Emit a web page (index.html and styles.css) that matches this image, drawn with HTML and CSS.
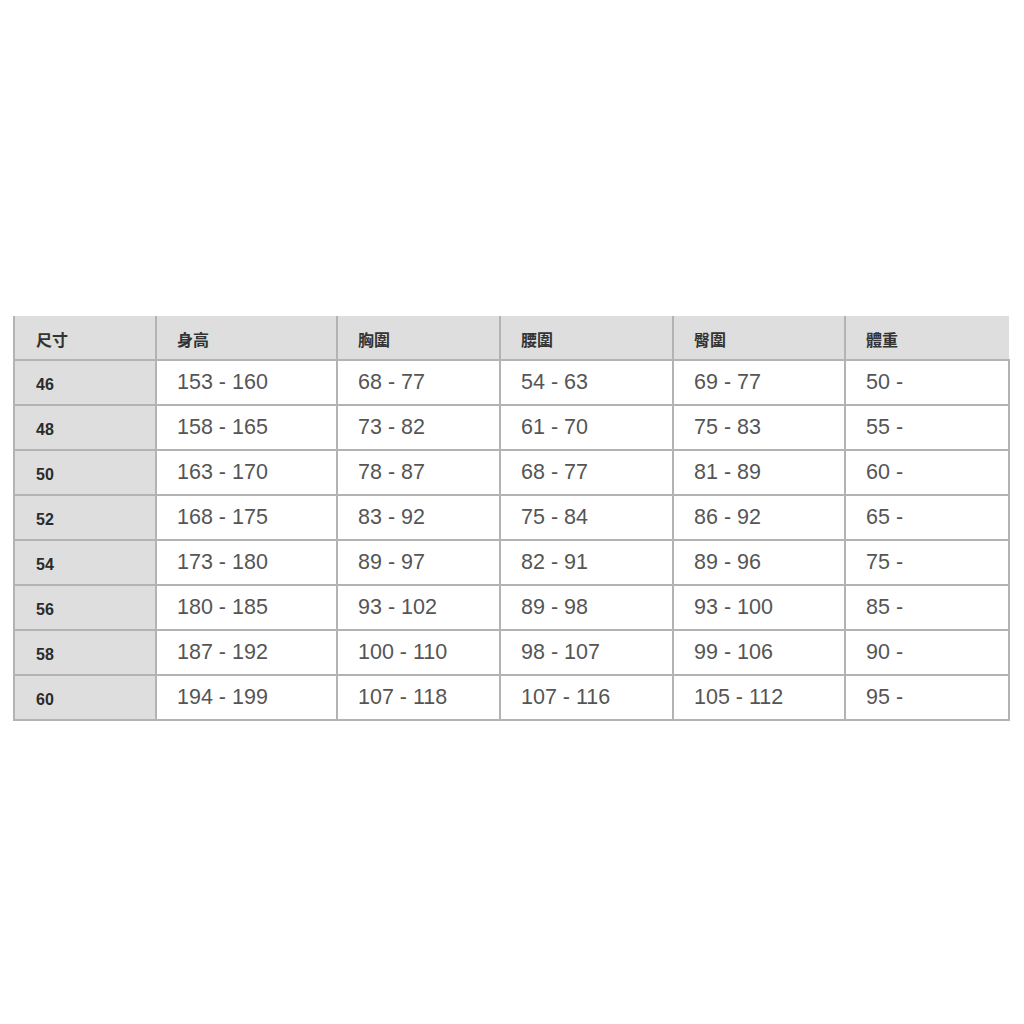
FILE: index.html
```html
<!DOCTYPE html>
<html lang="zh-Hant">
<head>
<meta charset="utf-8">
<title>尺寸表</title>
<link rel="stylesheet" href="styles.css">
</head>
<body>
<div class="page">
<table class="size-table">
<colgroup>
<col class="c1"><col class="c2"><col class="c3"><col class="c4"><col class="c5"><col class="c6">
</colgroup>
<thead>
<tr><th>尺寸</th><th>身高</th><th>胸圍</th><th>腰圍</th><th>臀圍</th><th>體重</th></tr>
</thead>
<tbody>
<tr><th>46</th><td>153 - 160</td><td>68 - 77</td><td>54 - 63</td><td>69 - 77</td><td>50 -</td></tr>
<tr><th>48</th><td>158 - 165</td><td>73 - 82</td><td>61 - 70</td><td>75 - 83</td><td>55 -</td></tr>
<tr><th>50</th><td>163 - 170</td><td>78 - 87</td><td>68 - 77</td><td>81 - 89</td><td>60 -</td></tr>
<tr><th>52</th><td>168 - 175</td><td>83 - 92</td><td>75 - 84</td><td>86 - 92</td><td>65 -</td></tr>
<tr><th>54</th><td>173 - 180</td><td>89 - 97</td><td>82 - 91</td><td>89 - 96</td><td>75 -</td></tr>
<tr><th>56</th><td>180 - 185</td><td>93 - 102</td><td>89 - 98</td><td>93 - 100</td><td>85 -</td></tr>
<tr><th>58</th><td>187 - 192</td><td>100 - 110</td><td>98 - 107</td><td>99 - 106</td><td>90 -</td></tr>
<tr><th>60</th><td>194 - 199</td><td>107 - 118</td><td>107 - 116</td><td>105 - 112</td><td>95 -</td></tr>
</tbody>
</table>
</div>
</body>
</html>
```
FILE: styles.css
```css
html, body {
  margin: 0;
  padding: 0;
  background: #ffffff;
}
.page {
  padding: 316px 0 0 13px;
}
.size-table {
  border-collapse: collapse;
  table-layout: fixed;
  width: 995px;
  font-family: "Liberation Sans", "Noto Sans CJK TC", Arial, sans-serif;
}
.c1 { width: 142px; }
.c2 { width: 181px; }
.c3 { width: 163px; }
.c4 { width: 173px; }
.c5 { width: 172px; }
.c6 { width: 164px; }
.size-table th,
.size-table td {
  border: 2px solid #b3b3b3;
  text-align: left;
  padding: 0 0 0 20px;
  box-sizing: border-box;
}
.size-table thead th {
  background: #dedede;
  height: 44px;
  font-family: "Noto Sans CJK TC", "Liberation Sans", sans-serif;
  font-weight: 700;
  font-size: 16px;
  color: #333333;
  border-top: none;
  padding-top: 2px;
}
.size-table thead th:first-child {
  padding-left: 21px;
}
.size-table thead th:last-child {
  border-right: none;
}
.size-table tbody tr {
  height: 45px;
}
.size-table tbody th {
  background: #dedede;
  font-weight: 700;
  font-size: 16px;
  color: #2b2b2b;
  padding-top: 4px;
  padding-left: 21px;
}
.size-table tbody td {
  background: #ffffff;
  font-size: 21.5px;
  color: #555555;
  padding-bottom: 1px;
}
```
